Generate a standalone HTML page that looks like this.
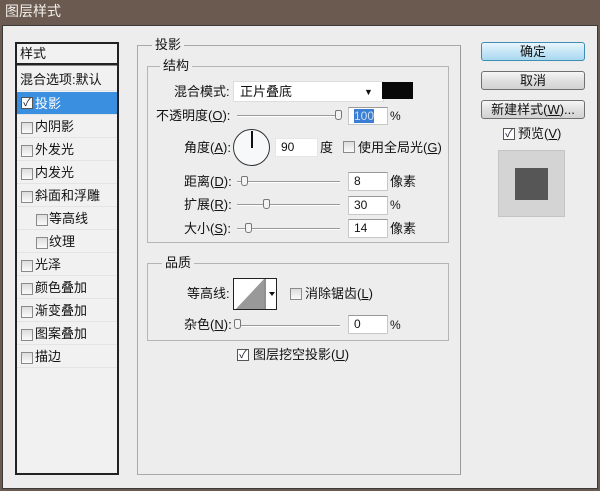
<!DOCTYPE html>
<html><head><meta charset="utf-8"><style>
*{margin:0;padding:0;box-sizing:border-box}
body{width:600px;height:491px;overflow:hidden;background:#6a5a4f;font-family:"Liberation Sans","Noto Sans CJK SC",sans-serif;font-size:12px;color:#111;position:relative}
.a{position:absolute}
.t{position:absolute;white-space:nowrap;line-height:16px}
.cb{position:absolute;width:12px;height:12px;border:1px solid #8a8a8a;background:linear-gradient(#ddd,#fafafa)}
.ck{position:absolute;width:12px;height:12px;border:1px solid #555;background:#fff;font-size:11px;line-height:10px;text-align:center;color:#223}
.sl{position:absolute;height:2px;border-top:1px solid #999;border-bottom:1px solid #fff}
.th{position:absolute;width:7px;height:10px;border:1px solid #777;border-radius:2px 2px 3px 3px;background:#f4f4f4}
.tb{position:absolute;width:40px;height:19px;background:#fff;border:1px solid #c8c8c8;border-top-color:#999;padding-left:5px;line-height:17px;font-size:12px}
.btn{position:absolute;left:481px;width:104px;height:19px;border:1px solid #707070;border-radius:3px;background:linear-gradient(#f6f6f6,#e0e0e0 50%,#d2d2d2);text-align:center;line-height:17px;font-size:13px}
.row{position:absolute;left:17px;width:100px;height:23px;border-bottom:1px solid #e4e4e4;line-height:24px;font-size:13px}
</style></head><body>
<div class="t" style="left:5px;top:3px;color:#f4f0ec;font-size:14px">图层样式</div>
<div class="a" style="left:2px;top:25px;width:596px;height:464px;background:#ededed;border:1px solid #3a3a3a"></div>
<div class="a" style="left:15px;top:42px;width:104px;height:433px;background:#f1f1f1;border:2px solid #222"></div>
<div class="t" style="left:20px;top:46px;font-size:13px">样式</div>
<div class="a" style="left:17px;top:63px;width:100px;height:3px;border-top:2px solid #222;border-bottom:1px solid #888"></div>
<div class="row" style="top:68px;padding-left:3px">混合选项:默认</div>
<div class="row" style="top:92px;background:#3b8fe0;color:#fff;padding-left:18px">投影</div>
<div class="ck" style="left:21px;top:97px">✓</div>
<div class="row" style="top:115px;padding-left:18px">内阴影</div>
<div class="row" style="top:138px;padding-left:18px">外发光</div>
<div class="row" style="top:161px;padding-left:18px">内发光</div>
<div class="row" style="top:184px;padding-left:18px">斜面和浮雕</div>
<div class="row" style="top:207px;padding-left:32px">等高线</div>
<div class="row" style="top:230px;padding-left:32px">纹理</div>
<div class="row" style="top:253px;padding-left:18px">光泽</div>
<div class="row" style="top:276px;padding-left:18px">颜色叠加</div>
<div class="row" style="top:299px;padding-left:18px">渐变叠加</div>
<div class="row" style="top:322px;padding-left:18px">图案叠加</div>
<div class="row" style="top:345px;padding-left:18px">描边</div>
<div class="cb" style="left:21px;top:122px"></div><div class="cb" style="left:21px;top:145px"></div><div class="cb" style="left:21px;top:168px"></div><div class="cb" style="left:21px;top:191px"></div>
<div class="cb" style="left:36px;top:214px"></div><div class="cb" style="left:36px;top:237px"></div>
<div class="cb" style="left:21px;top:260px"></div><div class="cb" style="left:21px;top:283px"></div><div class="cb" style="left:21px;top:306px"></div><div class="cb" style="left:21px;top:329px"></div><div class="cb" style="left:21px;top:352px"></div>

<div class="a" style="left:137px;top:45px;width:324px;height:430px;border:1px solid #aaa;border-right-color:#999"></div>
<div class="t" style="left:152px;top:37px;background:#ededed;padding:0 3px;font-size:13px">投影</div>
<div class="a" style="left:147px;top:66px;width:302px;height:177px;border:1px solid #b5b5b5"></div>
<div class="t" style="left:160px;top:58px;background:#ededed;padding:0 3px;font-size:13px">结构</div>
<div class="t" style="left:174px;top:84px;font-size:13px">混合模式:</div>
<div class="a" style="left:233px;top:81px;width:151px;height:21px;background:#fff;border:1px solid #ddd"></div>
<div class="t" style="left:240px;top:84px;font-size:13px">正片叠底</div>
<div class="t" style="left:364px;top:84px;font-size:9px">▼</div>
<div class="a" style="left:382px;top:82px;width:31px;height:17px;background:#080808"></div>
<div class="t" style="left:156px;top:108px;font-size:13px">不透明度(<u>O</u>):</div>
<div class="sl" style="left:237px;top:115px;width:103px"></div><div class="th" style="left:335px;top:110px"></div>
<div class="tb" style="left:348px;top:107px;height:18px"><span style="background:#3b7fd4;color:#cde">100</span></div>
<div class="t" style="left:390px;top:108px">%</div>
<div class="t" style="left:184px;top:140px;font-size:13px">角度(<u>A</u>):</div>
<div class="a" style="left:233px;top:129px;width:37px;height:37px;border:1.5px solid #333;border-radius:50%;background:#f6f8fa"></div>
<div class="a" style="left:251px;top:131px;width:1.5px;height:17px;background:#111"></div>
<div class="tb" style="left:275px;top:138px;width:43px;border-color:#e6e6e6">90</div>
<div class="t" style="left:320px;top:140px;font-size:13px">度</div>
<div class="cb" style="left:343px;top:141px"></div>
<div class="t" style="left:358px;top:140px;font-size:13px">使用全局光(<u>G</u>)</div>
<div class="t" style="left:184px;top:174px;font-size:13px">距离(<u>D</u>):</div>
<div class="sl" style="left:237px;top:181px;width:103px"></div><div class="th" style="left:241px;top:176px"></div>
<div class="tb" style="left:348px;top:172px">8</div><div class="t" style="left:390px;top:174px;font-size:13px">像素</div>
<div class="t" style="left:184px;top:197px;font-size:13px">扩展(<u>R</u>):</div>
<div class="sl" style="left:237px;top:204px;width:103px"></div><div class="th" style="left:263px;top:199px"></div>
<div class="tb" style="left:348px;top:196px">30</div><div class="t" style="left:390px;top:197px">%</div>
<div class="t" style="left:184px;top:221px;font-size:13px">大小(<u>S</u>):</div>
<div class="sl" style="left:237px;top:228px;width:103px"></div><div class="th" style="left:245px;top:223px"></div>
<div class="tb" style="left:348px;top:219px">14</div><div class="t" style="left:390px;top:221px;font-size:13px">像素</div>

<div class="a" style="left:147px;top:263px;width:302px;height:78px;border:1px solid #b5b5b5"></div>
<div class="t" style="left:162px;top:255px;background:#ededed;padding:0 3px;font-size:13px">品质</div>
<div class="t" style="left:187px;top:286px;font-size:13px">等高线:</div>
<div class="a" style="left:233px;top:278px;width:44px;height:32px;border:1px solid #222;background:#fff;overflow:hidden">
<svg width="44" height="32" style="position:absolute;left:0;top:0"><polygon points="0,32 30,0 30,32" fill="#999"/><line x1="31" y1="0" x2="31" y2="32" stroke="#222"/><polygon points="35,13 41,13 38,17" fill="#111"/></svg></div>
<div class="cb" style="left:290px;top:288px"></div>
<div class="t" style="left:305px;top:286px;font-size:13px">消除锯齿(<u>L</u>)</div>
<div class="t" style="left:184px;top:317px;font-size:13px">杂色(<u>N</u>):</div>
<div class="sl" style="left:237px;top:325px;width:103px"></div><div class="th" style="left:234px;top:319px"></div>
<div class="tb" style="left:348px;top:315px">0</div><div class="t" style="left:390px;top:317px">%</div>
<div class="ck" style="left:237px;top:349px">✓</div>
<div class="t" style="left:253px;top:347px;font-size:13px">图层挖空投影(<u>U</u>)</div>

<div class="btn" style="top:42px;border-color:#3c8cb4;background:linear-gradient(#eaf6fc,#c6e6f6 50%,#a9d8f0)">确定</div>
<div class="btn" style="top:71px">取消</div>
<div class="btn" style="top:100px">新建样式(<u>W</u>)...</div>
<div class="ck" style="left:503px;top:128px">✓</div>
<div class="t" style="left:518px;top:126px;font-size:13px">预览(<u>V</u>)</div>
<div class="a" style="left:498px;top:150px;width:67px;height:67px;background:#d4d4d4;border:1px solid #c4c4c4"></div>
<div class="a" style="left:515px;top:168px;width:33px;height:32px;background:#565656"></div>
</body></html>
